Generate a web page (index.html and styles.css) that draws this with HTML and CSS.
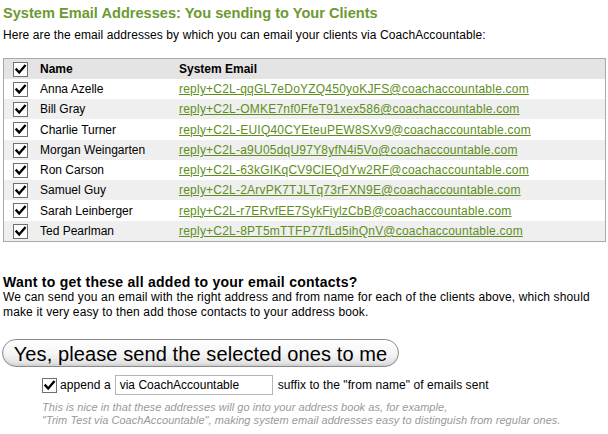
FILE: index.html
```html
<!DOCTYPE html>
<html>
<head>
<meta charset="utf-8">
<link rel="stylesheet" href="styles.css">
</head>
<body>
<h1 class="title">System Email Addresses: You sending to Your Clients</h1>
<p class="intro">Here are the email addresses by which you can email your clients via CoachAccountable:</p>
<table class="grid">
  <thead>
    <tr><th class="c-chk"><span class="chk"><svg viewBox="0 0 13 13"><path d="M2.5 6.5 L5.2 9.5 L10.8 3" /></svg></span></th><th class="c-name">Name</th><th class="c-mail">System Email</th></tr>
  </thead>
  <tbody>
    <tr><td class="c-chk"><span class="chk"><svg viewBox="0 0 13 13"><path d="M2.5 6.5 L5.2 9.5 L10.8 3" /></svg></span></td><td>Anna Azelle</td><td><a href="#">reply+C2L-qqGL7eDoYZQ450yoKJFS@coachaccountable.com</a></td></tr>
    <tr><td class="c-chk"><span class="chk"><svg viewBox="0 0 13 13"><path d="M2.5 6.5 L5.2 9.5 L10.8 3" /></svg></span></td><td>Bill Gray</td><td><a href="#">reply+C2L-OMKE7nf0FfeT91xex586@coachaccountable.com</a></td></tr>
    <tr class="tall"><td class="c-chk"><span class="chk"><svg viewBox="0 0 13 13"><path d="M2.5 6.5 L5.2 9.5 L10.8 3" /></svg></span></td><td>Charlie Turner</td><td><a href="#">reply+C2L-EUIQ40CYEteuPEW8SXv9@coachaccountable.com</a></td></tr>
    <tr><td class="c-chk"><span class="chk"><svg viewBox="0 0 13 13"><path d="M2.5 6.5 L5.2 9.5 L10.8 3" /></svg></span></td><td>Morgan Weingarten</td><td><a href="#">reply+C2L-a9U05dqU97Y8yfN4i5Vo@coachaccountable.com</a></td></tr>
    <tr><td class="c-chk"><span class="chk"><svg viewBox="0 0 13 13"><path d="M2.5 6.5 L5.2 9.5 L10.8 3" /></svg></span></td><td>Ron Carson</td><td><a href="#">reply+C2L-63kGIKqCV9ClEQdYw2RF@coachaccountable.com</a></td></tr>
    <tr><td class="c-chk"><span class="chk"><svg viewBox="0 0 13 13"><path d="M2.5 6.5 L5.2 9.5 L10.8 3" /></svg></span></td><td>Samuel Guy</td><td><a href="#">reply+C2L-2ArvPK7TJLTq73rFXN9E@coachaccountable.com</a></td></tr>
    <tr class="tall"><td class="c-chk"><span class="chk"><svg viewBox="0 0 13 13"><path d="M2.5 6.5 L5.2 9.5 L10.8 3" /></svg></span></td><td>Sarah Leinberger</td><td><a href="#">reply+C2L-r7ERvfEE7SykFiylzCbB@coachaccountable.com</a></td></tr>
    <tr><td class="c-chk"><span class="chk"><svg viewBox="0 0 13 13"><path d="M2.5 6.5 L5.2 9.5 L10.8 3" /></svg></span></td><td>Ted Pearlman</td><td><a href="#">reply+C2L-8PT5mTTFP77fLd5ihQnV@coachaccountable.com</a></td></tr>
  </tbody>
</table>
<h2 class="sub">Want to get these all added to your email contacts?</h2>
<p class="desc">We can send you an email with the right address and from name for each of the clients above, which should make it very easy to then add those contacts to your address book.</p>
<button class="big">Yes, please send the selected ones to me</button>
<div class="opt">
  <span class="chk"><svg viewBox="0 0 13 13"><path d="M2.5 6.5 L5.2 9.5 L10.8 3" /></svg></span>
  <span class="lbl">append a</span>
  <span class="field">via CoachAccountable</span>
  <span class="lbl">suffix to the "from name" of emails sent</span>
</div>
<p class="note">This is nice in that these addresses will go into your address book as, for example,<br>"Trim Test via CoachAccountable", making system email addresses easy to distinguish from regular ones.</p>
</body>
</html>
```
FILE: styles.css
```css
html, body { margin: 0; padding: 0; background: #fff; }
body {
  padding: 0 3px;
  font-family: "Liberation Sans", Arial, sans-serif;
  font-size: 12px;
  color: #000;
}
.title {
  margin: 0;
  padding-top: 5px;
  font-size: 14.6px;
  line-height: 17px;
  font-weight: bold;
  color: #6c9a2f;
}
.intro {
  margin: 6px 0 0;
  line-height: 14px;
  letter-spacing: 0.09px;
}
.grid {
  margin-top: 16px;
  width: 603px;
  border-collapse: collapse;
  border: 1px solid #a6aaad;
}
.grid th, .grid td {
  height: 20px;
  padding: 0;
  text-align: left;
  vertical-align: middle;
}
.grid tr.tall td { height: 21px; }
.grid th { background: #e4e4e4; font-weight: bold; }
.grid tbody tr:nth-child(odd) td { background: #fff; }
.grid tbody tr:nth-child(even) td { background: #efefef; }
.c-chk { width: 27px; padding-left: 9px !important; }
.c-name { width: 139px; }
.grid a { color: #5e8e1b; text-decoration: underline; letter-spacing: 0.22px; }
.chk {
  display: inline-block;
  box-sizing: border-box;
  width: 15px;
  height: 15px;
  border: 1px solid #707070;
  background: #fff;
  vertical-align: middle;
}
.chk svg { display: block; width: 13px; height: 13px; }
.chk path { fill: none; stroke: #000; stroke-width: 2.4; stroke-linecap: square; stroke-linejoin: miter; }
.grid .chk { margin-left: 0; }
.sub {
  margin: 32px 0 0;
  font-size: 14px;
  line-height: 16px;
  font-weight: bold;
  letter-spacing: 0.25px;
}
.desc {
  margin: 0;
  line-height: 15px;
  letter-spacing: 0.14px;
  max-width: 602px;
}
.big {
  margin: 19px 0 0 -1px;
  display: block;
  width: 397px;
  height: 28px;
  padding: 0 0 0 -2px;
  border: 1px solid #8a8a8a;
  border-radius: 14px;
  background: linear-gradient(#ffffff, #f6f6f6 50%, #dedede);
  box-shadow: inset 0 -2px 2px rgba(0,0,0,0.06);
  font-family: "Liberation Sans", Arial, sans-serif;
  font-size: 20px;
  line-height: 26px;
  letter-spacing: 0.1px;
  color: #000;
  text-align: center;
}
.opt {
  margin: 8px 0 0 39px;
  display: flex;
  align-items: center;
  height: 20px;
}
.opt .chk { margin-right: 3px; }
.opt .lbl { letter-spacing: 0.08px; }
.field {
  box-sizing: border-box;
  width: 158px;
  height: 20px;
  line-height: 18px;
  border: 1px solid #b5b5b5;
  padding: 0 4px;
  margin: 0 5px 0 4px;
}
.note {
  margin: 6px 0 0 39px;
  font-size: 11px;
  line-height: 13px;
  font-style: italic;
  color: #999;
  letter-spacing: 0.05px;
}
```
